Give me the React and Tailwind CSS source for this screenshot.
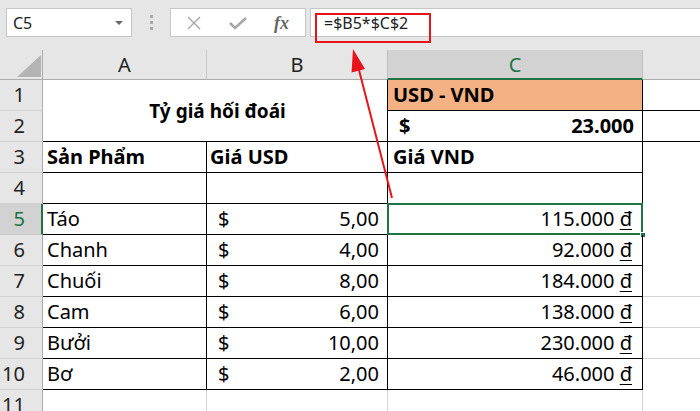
import React from "react";

const rows = [
  ["Táo", "5,00", "115.000"],
  ["Chanh", "4,00", "92.000"],
  ["Chuối", "8,00", "184.000"],
  ["Cam", "6,00", "138.000"],
  ["Bưởi", "10,00", "230.000"],
  ["Bơ", "2,00", "46.000"],
];

function RowHead({ n, sel }) {
  return (
    <div
      className={
        sel
          ? "bg-[#d2d2d2] text-[#217346] border-b border-b-[#c8c8c8] border-r-2 border-r-[#217346] text-right pr-[16px] text-[20px] leading-[30px]"
          : "bg-[#e6e6e6] text-[#222] border-b border-b-[#d0d0d0] border-r border-r-[#ababab] text-right pr-[17px] text-[20px] leading-[30px]"
      }
    >
      {n}
    </div>
  );
}

function Dong() {
  return <span className="underline underline-offset-[3px] decoration-1">đ</span>;
}

export default function App() {
  return (
    <div className="relative w-[700px] h-[411px] overflow-hidden bg-white font-['Noto_Sans',sans-serif] text-black">
      {/* Toolbar / formula bar */}
      <div className="h-[50px] bg-[#e6e6e6] flex items-start pt-[8px]">
        <div className="ml-[6px] w-[126px] h-[29px] bg-white border border-[#c6c6c6] flex items-center justify-between pl-[6px] pr-[8px]">
          <span className="text-[16px] text-[#222]">C5</span>
          <span className="w-0 h-0 border-l-[4px] border-r-[4px] border-t-[4px] border-l-transparent border-r-transparent border-t-[#666]" />
        </div>
        <div className="w-[38px] h-[29px] flex flex-col items-center justify-center gap-[3px]">
          <span className="w-[3px] h-[3px] bg-[#a8a8a8]" />
          <span className="w-[3px] h-[3px] bg-[#a8a8a8]" />
          <span className="w-[3px] h-[3px] bg-[#a8a8a8]" />
        </div>
        <div className="w-[136px] h-[29px] bg-white border border-[#c6c6c6] flex items-center">
          <svg width="14" height="14" viewBox="0 0 14 14" className="ml-[16px]">
            <path d="M1 1 L13 13 M13 1 L1 13" stroke="#a6a6a6" strokeWidth="1.4" fill="none" />
          </svg>
          <svg width="18" height="14" viewBox="0 0 18 14" className="ml-[28px]">
            <path d="M1 7 L6 12 L17 2" stroke="#a6a6a6" strokeWidth="2.6" fill="none" />
          </svg>
          <span className="ml-[27px] font-['Liberation_Serif',serif] italic font-bold text-[18px] text-[#666] leading-none">
            fx
          </span>
        </div>
        <div className="relative ml-[4px] flex-1 h-[29px] bg-white border border-[#c6c6c6] border-r-0 flex items-center pl-[13px]">
          <span className="text-[16px] text-[#222]">=$B5*$C$2</span>
          <div className="absolute left-[4px] top-[4px] w-[116px] h-[30px] border-2 border-[#e8141c]" />
        </div>
      </div>

      {/* Sheet grid */}
      <div className="grid grid-cols-[43px_164px_181px_255px_57px] grid-rows-[30px_repeat(11,31px)] text-[20px] leading-[30px]">
        {/* Column headers */}
        <div className="relative bg-[#e6e6e6] border-r border-r-[#ababab] border-b border-b-[#ababab]">
          <svg className="absolute left-[17px] top-[5px]" width="24" height="22" viewBox="0 0 24 22">
            <polygon points="24,0 24,22 0,22" fill="#b4b4b4" />
          </svg>
        </div>
        <div className="bg-[#e6e6e6] border-r border-r-[#c8c8c8] border-b border-b-[#ababab] text-center text-[#222]">A</div>
        <div className="bg-[#e6e6e6] border-r border-r-[#c8c8c8] border-b border-b-[#ababab] text-center text-[#222]">B</div>
        <div className="bg-[#d2d2d2] border-l border-l-[#c0c0c0] border-r border-r-[#c0c0c0] border-b-2 border-b-[#217346] text-center text-[#217346] -ml-px">C</div>
        <div className="bg-[#e6e6e6] border-b border-b-[#ababab]"></div>

        {/* Row 1 */}
        <RowHead n="1" />
        <div className="col-span-2 row-span-2 border-r border-r-black border-b border-b-black flex items-center justify-center font-bold text-[19px]">
          <span className="ml-[5px]">Tỷ giá hối đoái</span>
        </div>
        <div className="bg-[#f4b183] border-r border-r-black border-b border-b-black font-bold pl-[5px]">USD - VND</div>
        <div className="border-b border-b-black"></div>

        {/* Row 2 */}
        <RowHead n="2" />
        <div className="border-r border-r-black border-b border-b-black font-bold flex justify-between pl-[11px] pr-[8px]">
          <span>$</span>
          <span>23.000</span>
        </div>
        <div className="border-b border-b-black"></div>

        {/* Row 3 */}
        <RowHead n="3" />
        <div className="border-r border-r-black border-b border-b-black font-bold pl-[4px]">Sản Phẩm</div>
        <div className="border-r border-r-black border-b border-b-black font-bold pl-[3px]">Giá USD</div>
        <div className="border-r border-r-black border-b border-b-black font-bold pl-[5px]">Giá VND</div>
        <div></div>

        {/* Row 4 */}
        <RowHead n="4" />
        <div className="border-r border-r-black border-b border-b-black"></div>
        <div className="border-r border-r-black border-b border-b-black"></div>
        <div className="border-r border-r-black border-b border-b-black"></div>
        <div></div>

        {rows.map(([name, usd, vnd], i) => (
          <React.Fragment key={name}>
            <RowHead n={String(i + 5)} sel={i === 0} />
            <div className="border-r border-r-black border-b border-b-black pl-[4px]">{name}</div>
            <div className="border-r border-r-black border-b border-b-black flex justify-between pl-[11px] pr-[8px]">
              <span>$</span>
              <span>{usd}</span>
            </div>
            <div className="relative border-r border-r-black border-b border-b-black text-right pr-[10px]">
              {vnd} <Dong />
              {i === 0 && (
                <>
                  <div className="absolute -left-px -top-px -right-px -bottom-px border-2 border-[#217346]" />
                  <div className="absolute -right-[4px] -bottom-[4px] w-[6px] h-[6px] bg-[#217346] border border-white" />
                </>
              )}
            </div>
            <div className={i >= 2 && i <= 4 ? "border-b border-b-[#d4d4d4]" : ""}></div>
          </React.Fragment>
        ))}

        {/* Row 11 */}
        <RowHead n="11" />
        <div className="border-r border-r-[#d4d4d4]"></div>
        <div className="border-r border-r-[#d4d4d4]"></div>
        <div className="border-r border-r-[#d4d4d4]"></div>
        <div></div>
      </div>

      {/* Red annotation arrow */}
      <svg className="absolute left-0 top-0 pointer-events-none" width="700" height="411" viewBox="0 0 700 411">
        <line x1="392" y1="198" x2="359" y2="70" stroke="#e8141c" strokeWidth="2" />
        <polygon points="353,49 365,69 351.5,72.5" fill="#e8141c" />
      </svg>
    </div>
  );
}
